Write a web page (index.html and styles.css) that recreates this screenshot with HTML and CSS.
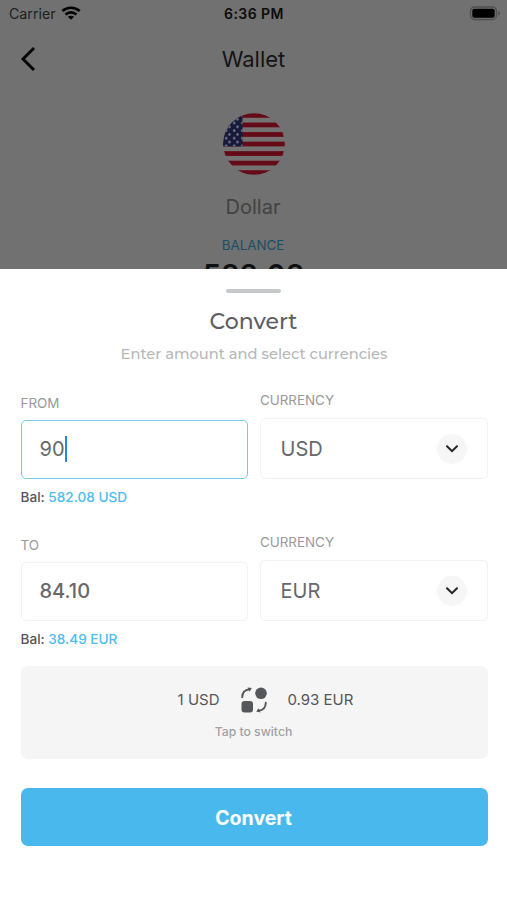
FILE: index.html
```html
<!DOCTYPE html>
<html lang="en">
<head>
<meta charset="utf-8">
<title>Wallet</title>
<link rel="stylesheet" href="styles.css">
</head>
<body>
<div class="wallet">
  <div class="status">
    <div class="carrier"><span class="carrier-name">Carrier</span>
      <svg width="20" height="14" viewBox="0 0 20 14" fill="none" stroke="#020202" stroke-width="2.7"><path d="M1.3 5.1C6.3.6 13.7.6 18.7 5.1M4.5 8.5c3.1-2.9 7.9-2.9 11 0"/><path d="M10 13.8 6.9 10.8c1.8-1.5 4.4-1.5 6.2 0z" fill="#020202" stroke="none"/></svg>
    </div>
    <span class="time">6:36 PM</span>
    <svg class="battery" width="32" height="15" viewBox="0 0 32 15"><rect x="1.5" y="1" width="26" height="12.5" rx="4" fill="none" stroke="#505050" stroke-width="1.3"/><rect x="3.3" y="2.8" width="22.4" height="9" rx="2" fill="#000"/><path d="M29 5v4.6q2-.8 2-2.3T29 5z" fill="#505050"/></svg>
  </div>
  <div class="nav">
    <svg class="back" width="16" height="26" viewBox="0 0 16 26" fill="none" stroke="#050505" stroke-width="2.9"><path d="M14 2 3 13l11 11"/></svg>
    <span class="nav-title">Wallet</span>
  </div>
  <svg class="flag" width="62" height="62" viewBox="0 0 62 62">
    <defs>
      <clipPath id="disc"><circle cx="31" cy="31" r="30.8"/></clipPath>
      <pattern id="stripes" width="62" height="9.54" patternUnits="userSpaceOnUse"><rect width="62" height="4.77" fill="#650b18"/></pattern>
      <pattern id="stars" width="8" height="7.6" patternUnits="userSpaceOnUse"><circle cx="3.2" cy="2.4" r="1.3" fill="#777985"/><circle cx="6.5" cy="6.2" r="1.3" fill="#777985"/></pattern>
    </defs>
    <g clip-path="url(#disc)"><rect width="62" height="62" fill="#747272"/><rect width="62" height="62" fill="url(#stripes)"/><rect width="19.5" height="33.4" fill="#171a3c"/><rect width="19.5" height="33.4" fill="url(#stars)"/></g>
  </svg>
  <div class="name"><span>Dollar</span></div>
  <div class="balance-label"><span>BALANCE</span></div>
  <div class="balance"><span>582.08</span></div>
</div>
<div class="sheet">
  <div class="handle"></div>
  <h1 class="title"><span>Convert</span></h1>
  <p class="subtitle"><span>Enter amount and select currencies</span></p>
  <div class="row">
    <div class="field amount">
      <label>FROM</label>
      <div class="box active"><span>90</span><i class="caret"></i></div>
      <div class="bal">Bal: <b>582.08 USD</b></div>
    </div>
    <div class="field currency">
      <label>CURRENCY</label>
      <div class="box"><span>USD</span><div class="chev"><svg width="14" height="10" viewBox="0 0 14 10" fill="none" stroke="#222427" stroke-width="2" stroke-linecap="round"><path d="m2 2.2 5 5 5-5"/></svg></div></div>
    </div>
  </div>
  <div class="row second">
    <div class="field amount">
      <label>TO</label>
      <div class="box strong"><span>84.10</span></div>
      <div class="bal">Bal: <b>38.49 EUR</b></div>
    </div>
    <div class="field currency">
      <label>CURRENCY</label>
      <div class="box"><span>EUR</span><div class="chev"><svg width="14" height="10" viewBox="0 0 14 10" fill="none" stroke="#222427" stroke-width="2" stroke-linecap="round"><path d="m2 2.2 5 5 5-5"/></svg></div></div>
    </div>
  </div>
  <div class="switch">
    <div class="rates">
      <span class="rate left">1 USD</span>
      <svg width="26" height="26" viewBox="0 0 26 26" fill="none" stroke="#55575a" stroke-width="1.9"><path d="M1.2 10.2C1.3 5.8 3.8 2.7 8.5 2.2M24.8 15.8c-.1 4.4-2.6 7.5-7.3 8" stroke-linecap="round"/><path d="M6.5.5 10.8 1 8.6 4.8zM19.5 25.5 15.2 24.6l2.4-3.4z" fill="#55575a" stroke="none"/><circle cx="20" cy="6.3" r="5.8" fill="#55575a" stroke="none"/><rect x=".5" y="14" width="11.5" height="11.5" rx="3" fill="#55575a" stroke="none"/></svg>
      <span class="rate right">0.93 EUR</span>
    </div>
    <div class="tap">Tap to switch</div>
  </div>
  <button class="submit">Convert</button>
</div>
</body>
</html>
```
FILE: styles.css
```css
* { box-sizing: border-box; }
body { margin: 0; width: 507px; height: 900px; overflow: hidden; background: #fff; font-family: Inter, "Liberation Sans", sans-serif; }
svg { display: block; flex: none; }
.wallet { height: 269px; overflow: hidden; background: #717171; display: flex; flex-direction: column; align-items: center; }
.status { width: 100%; height: 28px; padding: 0 6px 0 9px; display: grid; grid-template-columns: 1fr auto 1fr; align-items: center; flex: none; }
.carrier { display: flex; align-items: center; gap: 5px; font-size: 14.2px; line-height: 20px; color: #202020; }
.carrier svg { margin-top: -2px; }
.time { margin-left: -2px; font-size: 14px; font-weight: 600; line-height: 20px; letter-spacing: .45px; color: #0c0c0c; }
.battery { justify-self: end; margin-top: -2px; }
.nav { width: 100%; height: 62px; padding: 0 20px; display: grid; grid-template-columns: 1fr auto 1fr; align-items: center; flex: none; }
.nav-title { font-size: 22px; line-height: 28px; color: #151515; }
.flag { margin-top: 23px; }
.name { margin-top: 18px; margin-left: -1px; font-size: 20px; line-height: 28px; color: #424242; }
.balance-label { margin-top: 14px; margin-left: -1px; font-size: 13.4px; line-height: 20px; color: #1c4e66; }
.balance { margin-top: 4px; font-size: 29.2px; line-height: 34px; font-weight: 600; color: #111; }
.name, .balance-label, .balance { flex: none; }
.sheet { height: 631px; padding: 20px 19.5px 0 20.5px; display: flex; flex-direction: column; align-items: center; }
.handle { width: 55px; height: 4px; margin-right: 1px; border-radius: 2px; background: #c7c8cc; }
.title { margin: 14px 1px 0 0; font: 500 22px/30px Montserrat, Inter, sans-serif; color: #5d5e61; }
.subtitle { margin: 7px 0 0; font: 500 14.7px/20px Montserrat, Inter, sans-serif; color: #b6b7b9; }
.row { width: 467px; height: 142px; padding-top: 26px; display: grid; grid-template-columns: 227.5px 227.5px; column-gap: 12px; flex: none; }
.field { display: flex; flex-direction: column; }
.field label { font-size: 13.4px; line-height: 20px; color: #98999c; }
.amount label { margin-top: 3px; }
.box { height: 59px; margin-top: 7px; padding: 0 19px; display: flex; align-items: center; border: 1px solid #f2f3f4; border-radius: 5px; font-size: 20px; color: #66686b; flex: none; }
.amount .box { padding-left: 18px; padding-bottom: 1px; }
.currency .box { height: 61px; margin-top: 7.5px; padding: 1px 20px 0 19.5px; }
.active { border: 1.5px solid #73caea; }
.strong { font-weight: 500; }
.caret { width: 2.5px; height: 26px; background: #2686e8; }
.bal { margin-top: 8px; font-size: 13.6px; line-height: 20px; font-weight: 500; color: #55565a; }
.bal b { font-weight: 500; color: #4ebbee; }
.chev { width: 30px; height: 30px; margin-left: auto; border-radius: 50%; background: #f6f6f7; display: flex; align-items: center; justify-content: center; }
.switch { width: 467px; height: 93px; margin-top: 18px; border-radius: 7px; background: #f5f5f5; flex: none; }
.rates { height: 68px; display: grid; grid-template-columns: 199px 26px 1fr; column-gap: 21px; align-items: center; }
.rate { font-size: 15px; line-height: 20px; color: #55575a; }
.left { text-align: right; }
.tap { margin-top: -12px; margin-left: -1px; text-align: center; font-size: 12.2px; font-weight: 500; line-height: 20px; color: #a0a1a3; }
.submit { width: 467px; height: 58px; padding: 2px 1px 0 0; margin-top: 29px; border: 0; border-radius: 7px; background: #49b9ed; color: #fff; font: 700 19.5px/24px Inter, sans-serif; flex: none; }
```
